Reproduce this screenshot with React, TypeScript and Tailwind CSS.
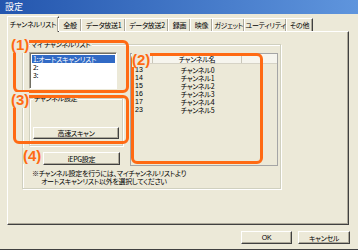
import React from "react";

const jp = "font-['Noto_Sans_CJK_JP','Noto_Sans_CJK_SC',sans-serif] [font-feature-settings:'palt']";

const tabs: { label: string; w: number }[] = [
  { label: "全般", w: 24 },
  { label: "データ放送1", w: 45 },
  { label: "データ放送2", w: 44 },
  { label: "録画", w: 23 },
  { label: "映像", w: 23 },
  { label: "ガジェット", w: 33 },
  { label: "ユーティリティ", w: 43 },
  { label: "その他", w: 27 },
];

const rows = [
  ["13", "チャンネル0"],
  ["14", "チャンネル1"],
  ["15", "チャンネル2"],
  ["16", "チャンネル3"],
  ["17", "チャンネル4"],
  ["23", "チャンネル5"],
];

const t7 = "text-[7px] leading-[8px] tracking-[-0.3px]";

function Btn({ children, className }: { children: React.ReactNode; className: string }) {
  return (
    <div
      className={
        "flex items-center justify-center border border-t-white border-l-white border-r-[#404040] border-b-[#404040] shadow-[inset_-1px_-1px_#aca899] bg-[#ece9d8] whitespace-nowrap " +
        t7 +
        " " +
        className
      }
    >
      {children}
    </div>
  );
}

export default function App() {
  return (
    <div className={"relative w-[358px] h-[250px] bg-[#ece9d8] overflow-hidden flex flex-col border-b border-[#404040] text-black " + jp}>
      {/* title bar */}
      <div className="h-[14px] shrink-0 bg-gradient-to-r from-[#2456ae] to-[#5f95dd] text-white pl-[5px] text-[9px] leading-[14px]">
        設定
      </div>

      {/* tabs */}
      <div className="h-[17px] shrink-0 pl-[7px] flex items-end relative z-10">
        <div className={"w-[52px] h-[16px] -mb-px bg-[#ece9d8] border-t border-l border-t-white border-l-white border-r border-r-[#404040] shadow-[inset_-1px_0_#aca899] flex items-center justify-center whitespace-nowrap pb-[1px] " + t7}>
          チャンネルリスト
        </div>
        {tabs.map((t) => (
          <div
            key={t.label}
            style={{ width: t.w }}
            className={"h-[13px] border-t border-t-white border-l border-l-white border-r border-r-[#404040] shadow-[inset_-1px_0_#aca899] flex items-center justify-center whitespace-nowrap -ml-px first:ml-0 " + t7}
          >
            {t.label}
          </div>
        ))}
      </div>

      {/* panel */}
      <div className="ml-[7px] w-[342px] h-[194px] shrink-0 border border-t-white border-l-white border-r-[#404040] border-b-[#404040] shadow-[inset_-1px_-1px_#aca899] pl-[14px] pt-[12px]">
        <div className="relative w-[259px] h-[145px] border border-[#d0d0bf] shadow-[inset_1px_1px_white,1px_1px_white]">
          <div className={"absolute left-[7px] -top-[5px] bg-[#ece9d8] px-[1px] whitespace-nowrap " + t7}>
            マイ チャンネルリスト
          </div>
          <div className="grid grid-cols-[94px_148px] gap-x-[7px] pl-[6px] pt-[7px]">
            {/* left column */}
            <div className="flex flex-col">
              <div className={"w-[88px] h-[37px] bg-white border border-t-[#aca899] border-l-[#aca899] border-r-white border-b-white shadow-[inset_1px_1px_#716f64] pt-[2px] pl-[2px] pr-[1px] " + t7}>
                <div className="h-[8px] bg-[#316ac5] text-white pl-[1px] whitespace-nowrap">1:オートスキャンリスト</div>
                <div className="h-[8px] pl-[1px]">2:</div>
                <div className="h-[8px] pl-[1px]">3:</div>
              </div>
              <div className="relative mt-[9px] w-[94px] h-[48px] border border-[#d0d0bf] shadow-[inset_1px_1px_white,1px_1px_white] pt-[28px] pl-[3px]">
                <div className={"absolute left-[3px] -top-[5px] bg-[#ece9d8] px-[1px] whitespace-nowrap " + t7}>
                  チャンネル設定
                </div>
                <Btn className="w-[86px] h-[12px]">高速スキャン</Btn>
              </div>
              <Btn className="mt-[6px] ml-[14px] w-[77px] h-[13px]">iEPG設定</Btn>
            </div>

            {/* list view */}
            <div className="mt-[1px] w-[148px] h-[113px] border border-[#a5a5a5] bg-[#ece9d8] flex flex-col">
              <div className={"h-[10px] flex bg-[#f6f5ee] border-b border-[#d6d3c6] " + t7}>
                <div className="w-[22px] border-r border-[#c9c6b8]" />
                <div className="w-[89px] border-r border-[#c9c6b8] text-center whitespace-nowrap leading-[10px]">チャンネル名</div>
                <div className="flex-1" />
              </div>
              <div className={"flex flex-col pt-[2px] " + t7}>
                {rows.map(([n, name]) => (
                  <div key={n} className="h-[8px] flex">
                    <div className="w-[22px] pl-[4px] font-['Liberation_Sans',sans-serif] tracking-normal">{n}</div>
                    <div className="w-[89px] text-center whitespace-nowrap">{name}</div>
                  </div>
                ))}
              </div>
            </div>

            {/* note */}
            <div className={"col-span-2 mt-[3px] pl-[3px] whitespace-nowrap " + t7}>
              <div>※チャンネル設定を行うには、マイチャンネルリストより</div>
              <div className="pl-[9px]">オートスキャンリスト以外を選択してください</div>
            </div>
          </div>
        </div>
      </div>

      {/* buttons */}
      <div className="mt-[6px] flex justify-end gap-[6px] pr-[8px]">
        <Btn className="w-[51px] h-[13px] font-['Liberation_Sans',sans-serif]">OK</Btn>
        <Btn className="w-[52px] h-[13px]">キャンセル</Btn>
      </div>

      {/* annotation overlays */}
      <div className="absolute left-[13px] top-[40px] w-[116px] h-[53px] border-[3px] border-[#ff6a13] rounded-[6px]" />
      <div className="absolute left-[13px] top-[95px] w-[116px] h-[49px] border-[3px] border-[#ff6a13] rounded-[6px]" />
      <div className="absolute left-[131px] top-[53px] w-[132px] h-[111px] border-[3px] border-[#ff6a13] rounded-[6px]" />

      <div className="absolute left-[11px] top-[37px] bg-[#ece9d8] text-[#ff6a13] font-bold font-['Liberation_Sans',sans-serif] text-[15px] leading-[16px]">(1)</div>
      <div className="absolute left-[132px] top-[53px] bg-[#ece9d8] text-[#ff6a13] font-bold font-['Liberation_Sans',sans-serif] text-[15px] leading-[14px]">(2)</div>
      <div className="absolute left-[11px] top-[92px] bg-[#ece9d8] text-[#ff6a13] font-bold font-['Liberation_Sans',sans-serif] text-[15px] leading-[16px]">(3)</div>
      <div className="absolute left-[23px] top-[148px] bg-[#ece9d8] text-[#ff6a13] font-bold font-['Liberation_Sans',sans-serif] text-[15px] leading-[16px]">(4)</div>
    </div>
  );
}
